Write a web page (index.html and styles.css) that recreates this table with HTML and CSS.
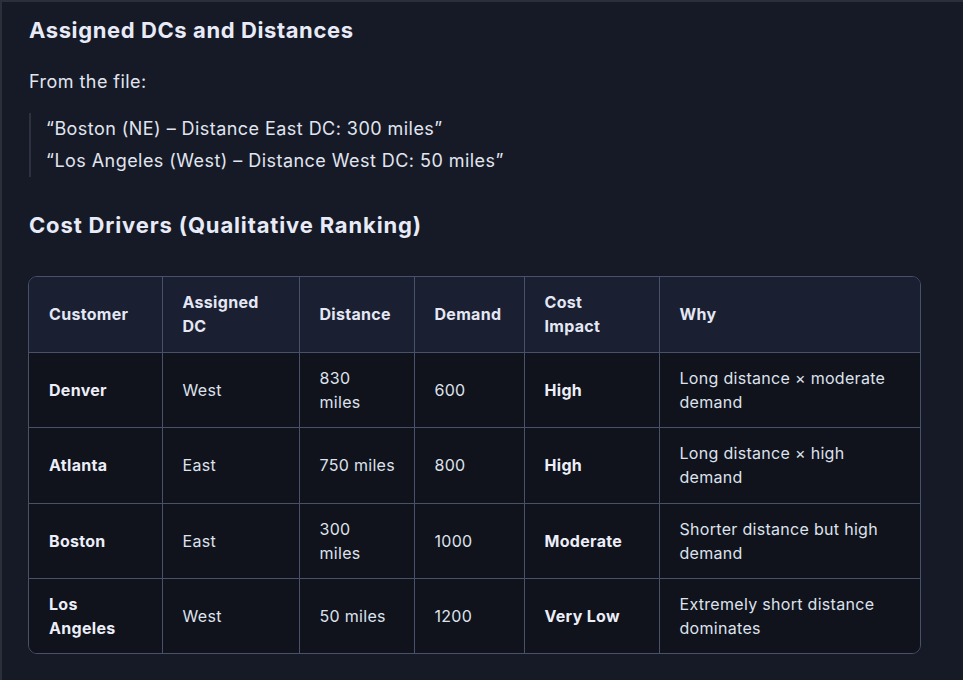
FILE: index.html
```html
<!DOCTYPE html>
<html lang="en">
<head>
<meta charset="utf-8">
<title>Cost Drivers</title>
<link rel="stylesheet" href="styles.css">
</head>
<body>
<main class="page">
  <h3 class="heading first">Assigned DCs and Distances</h3>
  <p class="para">From the file:</p>
  <blockquote class="quote">
    <p>“Boston (NE) – Distance East DC: 300 miles”</p>
    <p>“Los Angeles (West) – Distance West DC: 50 miles”</p>
  </blockquote>
  <h3 class="heading second">Cost Drivers (Qualitative Ranking)</h3>
  <div class="table-wrap">
    <table class="grid">
      <colgroup>
        <col class="c1"><col class="c2"><col class="c3"><col class="c4"><col class="c5"><col class="c6">
      </colgroup>
      <thead>
        <tr>
          <th>Customer</th>
          <th>Assigned DC</th>
          <th>Distance</th>
          <th>Demand</th>
          <th>Cost Impact</th>
          <th>Why</th>
        </tr>
      </thead>
      <tbody>
        <tr>
          <td><strong>Denver</strong></td>
          <td>West</td>
          <td>830<br>miles</td>
          <td>600</td>
          <td><strong>High</strong></td>
          <td>Long distance × moderate demand</td>
        </tr>
        <tr>
          <td><strong>Atlanta</strong></td>
          <td>East</td>
          <td class="nowrap">750 miles</td>
          <td>800</td>
          <td><strong>High</strong></td>
          <td>Long distance × high demand</td>
        </tr>
        <tr>
          <td><strong>Boston</strong></td>
          <td>East</td>
          <td>300<br>miles</td>
          <td>1000</td>
          <td><strong>Moderate</strong></td>
          <td>Shorter distance but high demand</td>
        </tr>
        <tr>
          <td><strong>Los Angeles</strong></td>
          <td>West</td>
          <td class="nowrap">50 miles</td>
          <td>1200</td>
          <td><strong>Very Low</strong></td>
          <td>Extremely short distance dominates</td>
        </tr>
      </tbody>
    </table>
  </div>
</main>
</body>
</html>
```

FILE: styles.css
```css
html, body {
  margin: 0;
  padding: 0;
  background: #151a26;
}
body {
  font-family: Inter, "Noto Sans", sans-serif;
  color: #e1e5f0;
}
.page {
  box-sizing: border-box;
  width: 963px;
  height: 680px;
  border-left: 2px solid #2b2f3a;
  border-top: 2px solid #2b2f3a;
  padding: 0 41px 0 27px;
  overflow: hidden;
}
.heading {
  margin: 0;
  font-size: 22px;
  font-weight: 700;
  color: #e8ebf7;
  line-height: 32px;
  letter-spacing: 0.6px;
}
.heading.first { margin-top: 12px; }
.para {
  margin: 20px 0 0;
  font-size: 18px;
  line-height: 32px;
  letter-spacing: 0.45px;
}
.quote {
  margin: 15px 0 0;
  padding: 0 0 0 15px;
  border-left: 2px solid #2c3140;
  font-size: 18px;
  line-height: 32px;
  letter-spacing: 0.45px;
}
.quote p { margin: 0; }
.heading.second { margin-top: 32px; letter-spacing: 0.85px; }
.table-wrap {
  margin: 35px 0 0 -1px;
  width: 891px;
  border: 1px solid #48506a;
  border-radius: 9px;
  overflow: hidden;
}
.grid {
  width: 100%;
  border-collapse: collapse;
  table-layout: fixed;
  font-size: 16px;
  line-height: 24px;
  letter-spacing: 0.3px;
}
.c1 { width: 133px; }
.c2 { width: 137px; }
.c3 { width: 115px; }
.c4 { width: 110px; }
.c5 { width: 135px; }
.c6 { width: auto; }
.grid th, .grid td {
  text-align: left;
  padding: 13px 20px 14px 20px;
  border-right: 1px solid #48506a;
  border-bottom: 1px solid #48506a;
  vertical-align: middle;
}
.grid td { padding-bottom: 13.3px; }
.grid .nowrap { white-space: nowrap; }
.grid th:last-child, .grid td:last-child { border-right: none; }
.grid tbody tr:last-child td { border-bottom: none; }
.grid th {
  background: #1a1f31;
  font-weight: 700;
  color: #e4e7f4;
}
.grid td {
  background: #10121c;
  color: #dee2ec;
}
.grid strong { font-weight: 700; color: #eceef8; }
```
